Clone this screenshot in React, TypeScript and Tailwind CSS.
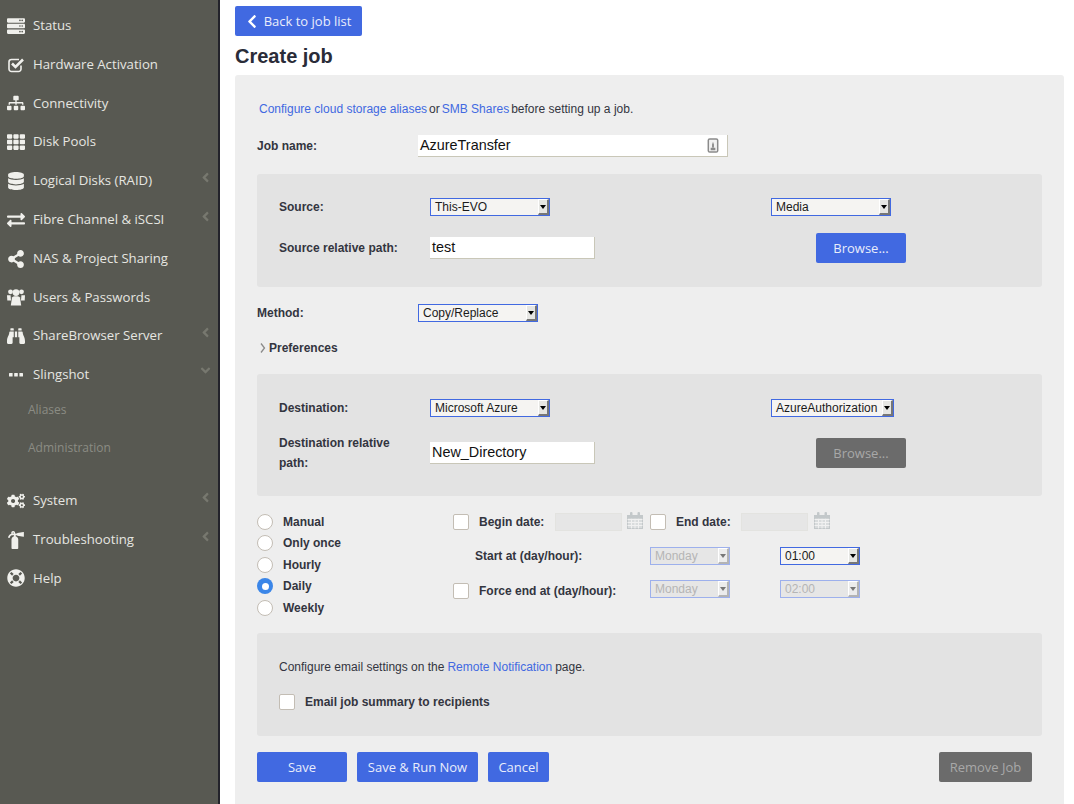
import type { ComponentType, ReactNode } from "react";
import {
  FaAngleDown,
  FaAngleLeft,
  FaBinoculars,
  FaChevronLeft,
  FaCogs,
  FaDatabase,
  FaExchangeAlt,
  FaFireExtinguisher,
  FaLifeRing,
  FaServer,
  FaShareAlt,
  FaSitemap,
  FaTh,
} from "react-icons/fa";

type IconType = ComponentType<{ className?: string }>;

interface NavItem {
  label: string;
  icon: IconType;
  arrow?: "left" | "down";
}

function CheckSquareIcon({ className }: { className?: string }) {
  return (
    <svg viewBox="0 0 18 18" className={className} fill="none" stroke="currentColor">
      <path d="M14 9.5V13a2.5 2.5 0 0 1-2.5 2.5H4.5A2.5 2.5 0 0 1 2 13V6a2.5 2.5 0 0 1 2.5-2.5H12" strokeWidth="1.6" />
      <path d="M5 7.5L8.5 11L16 3.5" strokeWidth="2.6" />
    </svg>
  );
}

function UsersIcon({ className }: { className?: string }) {
  return (
    <svg viewBox="0 0 18 18" className={className} fill="currentColor">
      <circle cx="3.5" cy="3.8" r="2.4" />
      <circle cx="14.5" cy="3.8" r="2.4" />
      <circle cx="9" cy="4.6" r="3.4" />
      <path d="M0 7.2h3.6L4 12.5H0.3zM18 7.2h-3.6L14 12.5h3.7z" />
      <path d="M5 9.5C5.5 8.7 7 8.3 9 8.3s3.5.4 4 1.2L14.2 17.5H3.8z" />
    </svg>
  );
}

function DotsIcon({ className }: { className?: string }) {
  return (
    <svg viewBox="0 0 18 18" className={className} fill="currentColor">
      <rect x="2" y="7" width="3.6" height="3.6" rx="0.5" />
      <rect x="7.2" y="7" width="3.6" height="3.6" rx="0.5" />
      <rect x="12.4" y="7" width="3.6" height="3.6" rx="0.5" />
    </svg>
  );
}

const NAV_TOP: NavItem[] = [
  { label: "Status", icon: FaServer },
  { label: "Hardware Activation", icon: CheckSquareIcon },
  { label: "Connectivity", icon: FaSitemap },
  { label: "Disk Pools", icon: FaTh },
  { label: "Logical Disks (RAID)", icon: FaDatabase, arrow: "left" },
  { label: "Fibre Channel & iSCSI", icon: FaExchangeAlt, arrow: "left" },
  { label: "NAS & Project Sharing", icon: FaShareAlt },
  { label: "Users & Passwords", icon: UsersIcon },
  { label: "ShareBrowser Server", icon: FaBinoculars, arrow: "left" },
  { label: "Slingshot", icon: DotsIcon, arrow: "down" },
];

const NAV_BOTTOM: NavItem[] = [
  { label: "System", icon: FaCogs, arrow: "left" },
  { label: "Troubleshooting", icon: FaFireExtinguisher, arrow: "left" },
  { label: "Help", icon: FaLifeRing },
];

function NavRow({ item }: { item: NavItem }) {
  const Icon = item.icon;
  return (
    <div className="flex h-[38.8px] items-center pl-[7px] pr-[5px] text-[13.2px] font-normal text-[#e6e6e1]">
      <span className="flex w-[26px] shrink-0 items-center">
        <Icon className="h-[18px] w-[18px] text-[#f0f0ec]" />
      </span>
      <span className="flex-1 whitespace-nowrap">{item.label}</span>
      {item.arrow === "left" && <FaAngleLeft className="mb-[7px] h-[15px] w-[15px] text-[#77786f]" />}
      {item.arrow === "down" && <FaAngleDown className="mb-[10px] h-[15px] w-[15px] text-[#77786f]" />}
    </div>
  );
}

function Sidebar() {
  return (
    <aside className="flex h-full w-[220px] shrink-0 flex-col border-r-2 border-[#23232b] bg-[#585952] pt-[6.5px] font-['Open_Sans',sans-serif]">
      {NAV_TOP.map((item) => (
        <NavRow key={item.label} item={item} />
      ))}
      <div className="-mt-[3px] flex h-[38px] items-center pl-[28px] text-[12px] font-normal text-[#8b8c84]">Aliases</div>
      <div className="flex h-[38px] items-center pl-[28px] text-[12px] font-normal text-[#8b8c84]">Administration</div>
      <div className="h-[14px]" />
      {NAV_BOTTOM.map((item) => (
        <NavRow key={item.label} item={item} />
      ))}
    </aside>
  );
}

function Select({ value, width, disabled }: { value: string; width: string; disabled?: boolean }) {
  return (
    <div
      className={`flex h-[18px] shrink-0 items-stretch border font-['Liberation_Sans',sans-serif] text-[12px] font-normal ${width} ${
        disabled ? "border-[#9db0ec] bg-[#e6e6e6] text-[#b5b5b5]" : "border-[#4169e1] bg-[#f5f4f2] text-[#1b1b1b]"
      }`}
    >
      <span className="flex flex-1 items-center overflow-hidden whitespace-nowrap pl-[4px]">{value}</span>
      <span
        className={`flex w-[11px] shrink-0 items-center justify-center border-b-2 border-r-2 border-l border-t ${
          disabled
            ? "border-b-[#b4b4b4] border-r-[#b4b4b4] border-l-white border-t-white bg-[#ececec]"
            : "border-b-[#777] border-r-[#777] border-l-white border-t-white bg-[#e6e6e3]"
        }`}
      >
        <span
          className={`h-0 w-0 border-x-[3.5px] border-t-[4px] border-x-transparent ${
            disabled ? "border-t-[#777]" : "border-t-black"
          }`}
        />
      </span>
    </div>
  );
}

function TextInput({ value, width, children }: { value: string; width: string; children?: ReactNode }) {
  return (
    <div
      className={`flex h-[22px] shrink-0 items-center justify-between border-b border-r border-[#c9c7b8] bg-white pl-[2px] pr-[8px] font-['Liberation_Sans',sans-serif] text-[14.4px] font-normal text-[#111] ${width}`}
    >
      <span className="pt-[1px]">{value}</span>
      {children}
    </div>
  );
}

function Button({ children, width, muted }: { children: ReactNode; width: string; muted?: boolean }) {
  return (
    <div
      className={`flex h-[30px] shrink-0 items-center justify-center rounded-[2px] pt-[1px] font-['Open_Sans',sans-serif] text-[13px] font-normal ${width} ${
        muted ? "bg-[#6b6b6b] text-[#a8a8a8]" : "bg-[#4169e1] text-[#e9edfb]"
      }`}
    >
      {children}
    </div>
  );
}

function Radio({ label, checked }: { label: string; checked?: boolean }) {
  return (
    <div className="flex h-[21.5px] items-center">
      <span
        className={`mr-[10px] flex h-[16px] w-[16px] items-center justify-center rounded-full ${
          checked ? "bg-[#3b86e8]" : "border border-[#c3bdb4] bg-white"
        }`}
      >
        {checked && <span className="h-[7px] w-[7px] rounded-full bg-white" />}
      </span>
      <span>{label}</span>
    </div>
  );
}

function Checkbox({ className }: { className?: string }) {
  return <span className={`block h-[16px] w-[16px] shrink-0 rounded-[2px] border border-[#c3bdb4] bg-white ${className ?? ""}`} />;
}

function CalendarIcon() {
  return (
    <svg viewBox="0 0 16 17" className="-mt-[3px] h-[17px] w-[16px] shrink-0" fill="none">
      <rect x="0.5" y="3.5" width="15" height="13" fill="#d9dcdd" stroke="#c3c8ca" />
      <path d="M0.5 7.5H15.5M0.5 10.5H15.5M0.5 13.5H15.5M4.5 6.5V16.5M8 6.5V16.5M11.5 6.5V16.5" stroke="#f1f1f1" />
      <rect x="0" y="3" width="16" height="3.5" fill="#c3c8ca" />
      <rect x="3" y="0" width="2.5" height="4.5" rx="1" fill="#c3c8ca" />
      <rect x="10.5" y="0" width="2.5" height="4.5" rx="1" fill="#c3c8ca" />
    </svg>
  );
}

function KeyBadge() {
  return (
    <svg viewBox="0 0 12 16" className="h-[15px] w-[12px]">
      <rect x="1" y="1" width="10" height="14" rx="1.5" fill="#f2f2f2" stroke="#8b8b8b" strokeWidth="1.6" />
      <path d="M6 4l1 3v3H5V7zM3.5 10.5h5V13h-5z" fill="#8b8b8b" />
    </svg>
  );
}

function DateInput() {
  return <span className="block h-[18px] w-[67px] shrink-0 border border-[#e3e3e0] bg-[#e6e6e6]" />;
}

function Link({ children }: { children: ReactNode }) {
  return <span className="font-normal text-[#4169e1]">{children}</span>;
}

export default function App() {
  return (
    <div className="flex h-screen w-full overflow-hidden bg-white font-['Liberation_Sans',sans-serif] text-[12px] font-bold text-[#33353f]">
      <Sidebar />
      <main className="flex min-w-0 flex-1 flex-col pl-[15px] pr-[10px] pt-[6px]">
        <div className="flex h-[30px] w-[127px] items-center justify-center gap-[6px] rounded-[2px] bg-[#4169e1] font-['Open_Sans',sans-serif] text-[13px] font-normal text-[#e9edfb]">
          <FaChevronLeft className="h-[15px] w-[12px] text-white" />
          <span className="pt-[1px]">Back to job list</span>
        </div>
        <h1 className="flex h-[39px] items-center text-[20px] font-bold text-[#2a2c38]">Create job</h1>
        <section className="flex-1 rounded-t-[3px] bg-[#eeeeee] px-[22px]">
          <p className="flex h-[60px] items-end pb-[17px] pl-[2px] font-normal">
            <Link>Configure cloud storage aliases</Link>
            <span className="ml-[2px]">or</span>
            <span className="ml-[2px]"><Link>SMB Shares</Link></span>
            <span className="ml-[2px]">before setting up a job.</span>
          </p>

          <div className="flex h-[22px] items-center">
            <span className="w-[161px] shrink-0">Job name:</span>
            <TextInput value="AzureTransfer" width="w-[310px]">
              <KeyBadge />
            </TextInput>
          </div>

          <div className="mt-[17px] h-[113px] rounded-[3px] bg-[#e3e3e3] px-[22px] pt-[24px]">
            <div className="flex h-[18px] items-center">
              <span className="w-[151px] shrink-0">Source:</span>
              <Select value="This-EVO" width="w-[120px]" />
              <span className="w-[221px] shrink-0" />
              <Select value="Media" width="w-[120px]" />
            </div>
            <div className="mt-[17px] flex h-[30px] items-center">
              <span className="w-[151px] shrink-0">Source relative path:</span>
              <TextInput value="test" width="w-[165px]" />
              <span className="w-[221px] shrink-0" />
              <Button width="w-[90px]">Browse...</Button>
            </div>
          </div>

          <div className="mt-[17px] flex h-[18px] items-center">
            <span className="w-[161px] shrink-0">Method:</span>
            <Select value="Copy/Replace" width="w-[120px]" />
          </div>
          <div className="mt-[17px] flex h-[18px] items-center">
            <svg viewBox="0 0 6 10" className="ml-[3px] mr-[3px] h-[10px] w-[6px]" fill="none" stroke="#8a8a8a" strokeWidth="1.3">
              <path d="M1 0.5L4.5 5L1 9.5" />
            </svg>
            Preferences
          </div>

          <div className="mt-[17px] h-[122px] rounded-[3px] bg-[#e3e3e3] px-[22px] pt-[25px]">
            <div className="flex h-[18px] items-center">
              <span className="w-[151px] shrink-0">Destination:</span>
              <Select value="Microsoft Azure" width="w-[120px]" />
              <span className="w-[221px] shrink-0" />
              <Select value="AzureAuthorization" width="w-[123px]" />
            </div>
            <div className="mt-[16px] flex h-[40px] items-center">
              <span className="w-[151px] shrink-0 leading-[20px]">
                Destination relative
                <br />
                path:
              </span>
              <TextInput value="New_Directory" width="w-[165px]" />
              <span className="w-[221px] shrink-0" />
              <Button width="w-[90px]" muted>
                Browse...
              </Button>
            </div>
          </div>

          <div className="mt-[15px] flex h-[112px]">
            <div className="w-[196px] shrink-0">
              <Radio label="Manual" />
              <Radio label="Only once" />
              <Radio label="Hourly" />
              <Radio label="Daily" checked />
              <Radio label="Weekly" />
            </div>
            <div>
              <div className="mt-[1px] flex h-[20px] items-center">
                <Checkbox className="mr-[10px]" />
                <span className="w-[76px] shrink-0">Begin date:</span>
                <DateInput />
                <span className="ml-[5px]"><CalendarIcon /></span>
                <Checkbox className="ml-[7px] mr-[10px]" />
                <span className="w-[65px] shrink-0">End date:</span>
                <DateInput />
                <span className="ml-[6px]"><CalendarIcon /></span>
              </div>
              <div className="mt-[15px] flex h-[18px] items-center">
                <span className="w-[197px] shrink-0 pl-[22px]">Start at (day/hour):</span>
                <Select value="Monday" width="w-[80px]" disabled />
                <span className="w-[50px] shrink-0" />
                <Select value="01:00" width="w-[80px]" />
              </div>
              <div className="mt-[15px] flex h-[18px] items-center">
                <Checkbox className="mr-[10px] mt-[3px]" />
                <span className="w-[171px] shrink-0 pt-[3px]">Force end at (day/hour):</span>
                <Select value="Monday" width="w-[80px]" disabled />
                <span className="w-[50px] shrink-0" />
                <Select value="02:00" width="w-[80px]" disabled />
              </div>
            </div>
          </div>

          <div className="mt-[10px] h-[103px] rounded-[3px] bg-[#e3e3e3] px-[22px] pt-[27px]">
            <p className="flex h-[14px] items-center gap-[3px] font-normal">
              Configure email settings on the <Link>Remote Notification</Link> page.
            </p>
            <div className="mt-[20px] flex h-[16px] items-center">
              <Checkbox className="mr-[10px]" />
              Email job summary to recipients
            </div>
          </div>

          <div className="mt-[16px] flex items-center">
            <Button width="w-[90px]">Save</Button>
            <span className="ml-[10px]"><Button width="w-[121px]">Save &amp; Run Now</Button></span>
            <span className="ml-[10px]"><Button width="w-[61px]">Cancel</Button></span>
            <span className="ml-[390px]"><Button width="w-[93px]" muted>Remove Job</Button></span>
          </div>
        </section>
      </main>
    </div>
  );
}
